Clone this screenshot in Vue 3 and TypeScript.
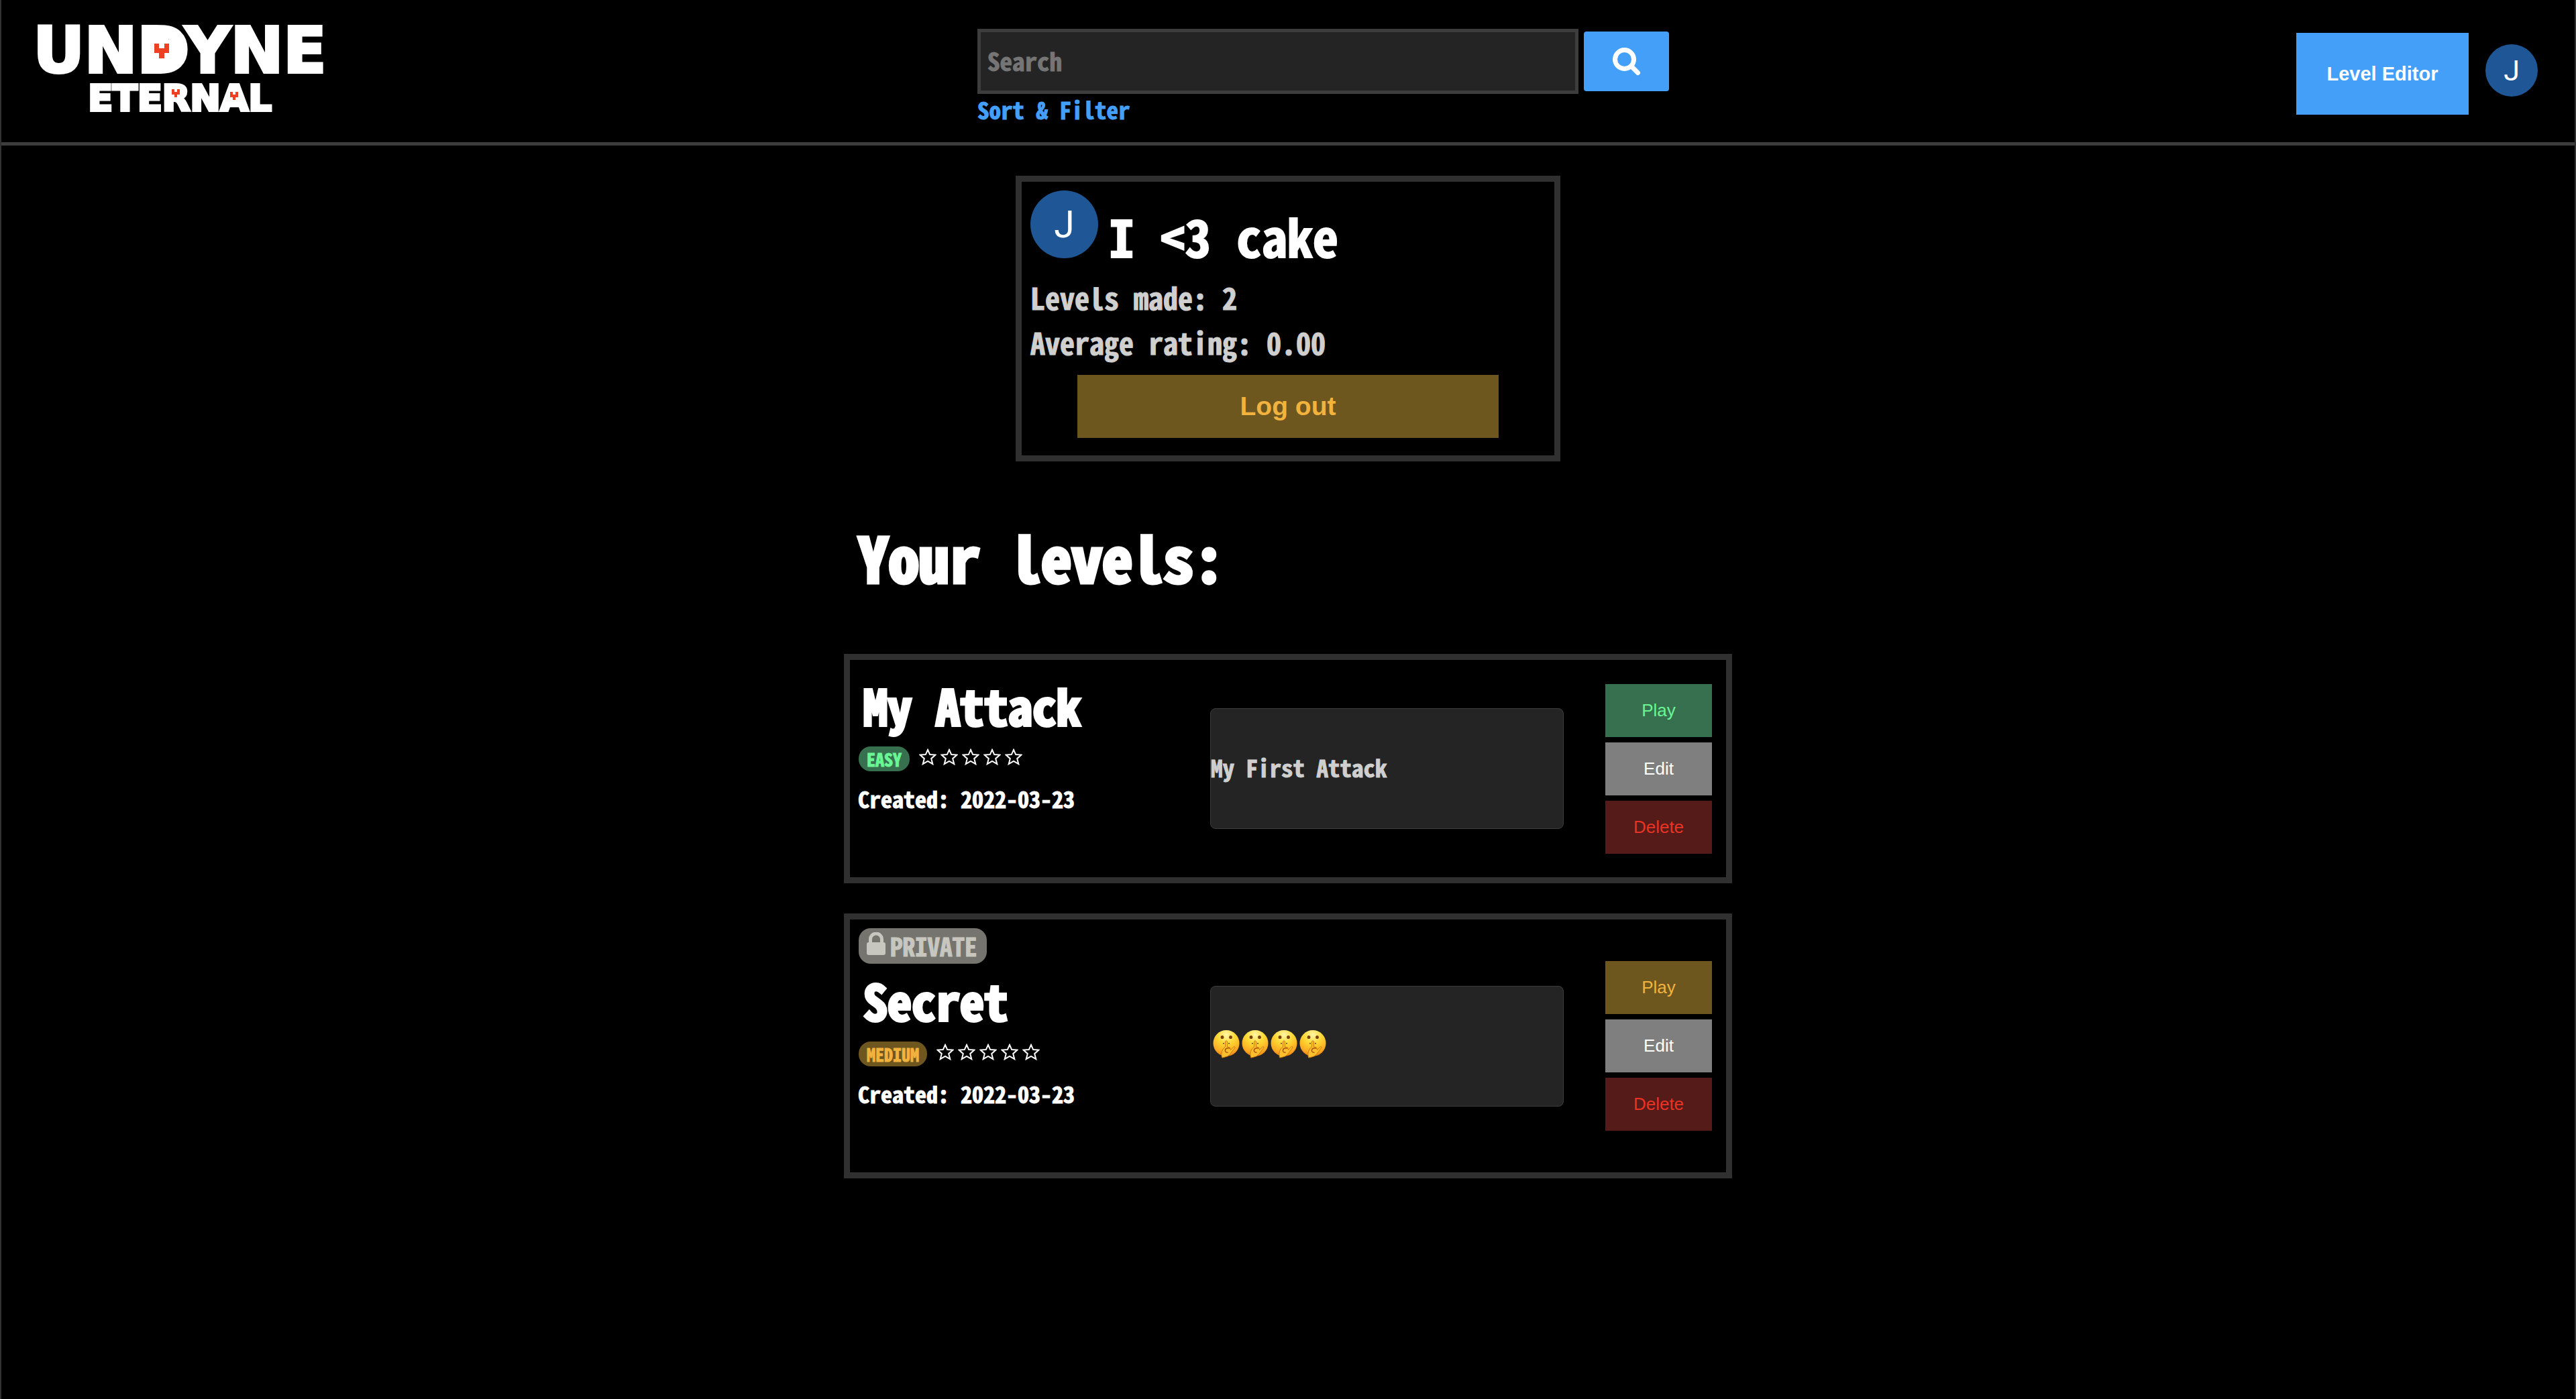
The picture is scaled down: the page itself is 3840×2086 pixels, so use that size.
<script setup lang="ts">
interface Level {
  title: string
  difficulty: string
  tone: string
  isPrivate: boolean
  created: string
  description: string
  shushes: number
}

const levels: Level[] = [
  { title: 'My Attack', difficulty: 'EASY', tone: 'green', isPrivate: false, created: '2022-03-23', description: 'My First Attack', shushes: 0 },
  { title: 'Secret', difficulty: 'MEDIUM', tone: 'gold', isPrivate: true, created: '2022-03-23', description: '', shushes: 4 },
]
</script>

<template>
  <div class="page">
    <header class="bar">
      <a class="logo" href="#">
        <svg viewBox="0 0 451 124" role="img" aria-label="Undyne Eternal">
          <g class="wordmark" text-anchor="middle">
            <text class="logo-top" x="225" y="65">UNDYNE</text>
            <text class="logo-bottom" x="225" y="122">ETERNAL</text>
          </g>
          <!-- white pads close the letter counters behind each heart -->
          <path class="pad" d="M180 11h28v42h-28zM208 16h8v32h-8zM211 89h16v14h-16zM299 93h14v16h-14z" />
          <path class="heart" d="M187 22h7v7h8v-7h7v14h-7v8h-8v-8h-7zM213 90h4v4h4v-4h4v8h-4v4h-4v-4h-4zM300 94h4v4h4v-4h4v8h-4v4h-4v-4h-4z" />
        </svg>
      </a>

      <form class="search" role="search" @submit.prevent>
        <div class="search-row">
          <input class="search-input" type="search" placeholder="Search" aria-label="Search" />
          <button class="search-button" type="submit" aria-label="Search">
            <svg viewBox="0 0 42 42" aria-hidden="true">
              <circle cx="17.500" cy="17.500" r="14" />
              <path d="M28 28l9.500 9.500" />
            </svg>
          </button>
        </div>
        <a class="filter" href="#">Sort &amp; Filter</a>
      </form>

      <nav class="account">
        <button class="editor" type="button">Level Editor</button>
        <a class="avatar" href="#" aria-label="Profile">J</a>
      </nav>
    </header>

    <main>
      <section class="profile">
        <div class="who">
          <span class="avatar large">J</span>
          <h2>I &lt;3 cake</h2>
        </div>
        <p>Levels made: 2</p>
        <p>Average rating: 0.00</p>
        <button class="logout gold" type="button">Log out</button>
      </section>

      <section class="levels">
        <h1>Your levels:</h1>
        <article v-for="level in levels" :key="level.title" class="level">
          <div class="info">
            <span v-if="level.isPrivate" class="private">
              <svg viewBox="0 0 28 34" aria-hidden="true">
                <path class="shackle" d="M5.500 18v-7.500a8.500 8.500 0 0 1 17 0V18" />
                <rect y="15" width="28" height="19" rx="3" />
              </svg>
              PRIVATE
            </span>
            <h3>{{ level.title }}</h3>
            <div class="meta">
              <span class="badge" :class="level.tone">{{ level.difficulty }}</span>
              <span class="stars" role="img" aria-label="0 of 5 stars">
                <svg v-for="n in 5" :key="n" viewBox="0 0 26 26">
                  <path d="M13 2l3.200 7.100 8.200.500-6.200 5.600 2.100 8L13 19l-7.300 4.200 2.100-8-6.200-5.600 8.200-.500z" />
                </svg>
              </span>
            </div>
            <p class="created">Created: {{ level.created }}</p>
          </div>
          <div class="description">
            <template v-if="level.description">{{ level.description }}</template>
            <svg v-if="level.shushes" class="shushes" :viewBox="`0 0 ${level.shushes * 43} 43`" role="img" aria-label="Shushing faces">
              <defs>
                <radialGradient id="face" cx="50%" cy="18%" r="84%">
                  <stop offset="0" stop-color="#fff6a8" />
                  <stop offset=".4" stop-color="#fdd935" />
                  <stop offset=".8" stop-color="#fba922" />
                  <stop offset="1" stop-color="#e87c12" />
                </radialGradient>
              </defs>
              <g v-for="n in level.shushes" :key="n" :transform="`translate(${(n - 1) * 43} 0)`">
                <circle cx="23" cy="20.500" r="19.500" fill="url(#face)" />
                <ellipse cx="17" cy="11.500" rx="2.400" ry="2.600" fill="#7a430b" />
                <ellipse cx="29.500" cy="11.500" rx="2.400" ry="2.600" fill="#7a430b" />
                <path d="M19 21.500v-1.500M27 21.500v-1.500" stroke="#7a430b" stroke-width="2" />
                <path d="M21.500 18q1.500-3 3 0v8q4.500 0 5 4.500l5-5q2 0 1.200 2l-7.200 9.500q-3 3.500-7 4-3 1-5 1-1.500-5 0-9.500 1-4 5-6.500z" fill="#fcc02e" stroke="#d07a10" />
                <path d="M28.500 28q-6-1-7 2.500t4 4" fill="none" stroke="#a9560a" stroke-width="1.500" />
              </g>
            </svg>
          </div>
          <div class="actions">
            <button type="button" :class="level.tone">Play</button>
            <button type="button" class="gray">Edit</button>
            <button type="button" class="red">Delete</button>
          </div>
        </article>
      </section>
    </main>
  </div>
</template>

<style>
body {
  margin: 0;
  background: #000;
}
</style>

<style scoped>
* {
  box-sizing: border-box;
}

.page {
  min-height: 100vh;
  border: solid #333;
  border-width: 0 2px;
  background: #000;
  color: #fff;
  font-family: "Noto Sans Mono CJK JP", "DejaVu Sans Mono", monospace;
  font-weight: 700;
  -webkit-text-stroke: 1px currentColor;
}

h1, h2, h3, p {
  margin: 0;
}

button {
  border: 0;
  padding: 0;
  font-family: "Liberation Sans", Arial, sans-serif;
  -webkit-text-stroke: 0;
  cursor: pointer;
}

a {
  text-decoration: none;
}

.bar {
  display: flex;
  justify-content: space-between;
  align-items: flex-start;
  height: 217px;
  padding: 43px 55px 0 41px;
  border-bottom: 5px solid #3d3d3d;
}

.logo {
  width: 479px;
}

.logo svg {
  display: block;
  width: 451px;
  height: 124px;
  overflow: visible;
}

.wordmark {
  fill: #fff;
  stroke: #fff;
  stroke-width: 4;
  font-family: "DejaVu Sans", sans-serif;
  font-weight: 700;
  -webkit-text-stroke: 4px #fff;
}

.logo-top {
  font-size: 94px;
}

.logo-bottom {
  font-size: 54px;
}

.pad {
  fill: #fff;
}

.heart {
  fill: #ee4023;
}

.search-row {
  display: flex;
  align-items: flex-start;
  gap: 8px;
}

.search-input {
  width: 896px;
  height: 97px;
  padding: 0 10px 4px;
  border: 5px solid #3d3d3d;
  border-radius: 0;
  background: #242424;
  color: #fff;
  font: inherit;
  font-size: 37px;
  -webkit-text-stroke: inherit;
  appearance: none;
}

.search-input::placeholder {
  color: #757575;
  -webkit-text-stroke: 1px #757575;
}

.search-button {
  display: flex;
  align-items: center;
  justify-content: center;
  width: 127px;
  height: 89px;
  margin-top: 4px;
  border-radius: 4px;
  background: #449ff8;
}

.search-button svg {
  width: 42px;
  height: 42px;
  fill: none;
  stroke: #fff;
  stroke-width: 7;
  stroke-linecap: round;
}

.filter {
  display: block;
  color: #449ff8;
  font-size: 35px;
  line-height: 46px;
}

.account {
  display: flex;
  align-items: center;
  gap: 25px;
  padding-top: 6px;
}

.editor {
  width: 257px;
  height: 122px;
  background: #449ff8;
  color: #fff;
  font-size: 29px;
  font-weight: 700;
}

.avatar {
  display: flex;
  flex: none;
  align-items: center;
  justify-content: center;
  width: 78px;
  height: 78px;
  margin-bottom: 10px;
  border-radius: 50%;
  background: #1f5796;
  color: #fff;
  font-family: Roboto, sans-serif;
  font-size: 43px;
  font-weight: 400;
  -webkit-text-stroke: 0;
}

.avatar.large {
  width: 101px;
  height: 101px;
  margin: 0;
  font-size: 55px;
}

main {
  display: flex;
  flex-direction: column;
  align-items: center;
  padding-top: 45px;
}

.profile {
  display: flex;
  flex-direction: column;
  width: 100%;
  max-width: 812px;
  padding: 13px 13px 26px;
  border: 9px solid #303030;
}

.who {
  display: flex;
  gap: 16px;
  height: 126px;
}

.who h2 {
  font-size: 76px;
  line-height: 134px;
  -webkit-text-stroke-width: 2px;
}

.profile p {
  color: #cfcfcf;
  font-size: 44px;
  line-height: 67px;
}

.logout {
  align-self: center;
  width: 628px;
  max-width: 100%;
  height: 94px;
  margin-top: 15px;
  font-size: 39px;
  font-weight: 700;
}

.levels {
  display: flex;
  flex-direction: column;
  width: 100%;
  max-width: 1324px;
}

h1 {
  margin: 74px 0 79px 21px;
  font-size: 91px;
  line-height: 134px;
  -webkit-text-stroke-width: 5px;
}

.level {
  display: flex;
  align-items: center;
  margin-bottom: 45px;
  padding: 13px 21px 13px 12px;
  border: 9px solid #303030;
}

.info {
  flex: 1;
  align-self: flex-start;
  padding-bottom: 79px;
}

.private {
  display: inline-flex;
  align-items: center;
  gap: 7px;
  height: 53px;
  margin-left: 1px;
  padding: 0 14px 0 12px;
  border-radius: 18px;
  background: #75746e;
  color: #c7c6bf;
  font-size: 37px;
  line-height: 53px;
}

.private svg {
  width: 28px;
  height: 34px;
  margin-bottom: 8px;
  fill: currentColor;
}

.private .shackle {
  fill: none;
  stroke: currentColor;
  stroke-width: 5;
}

h3 {
  padding: 8px 8px 16px;
  font-size: 72px;
  line-height: 92px;
  -webkit-text-stroke-width: 4px;
}

.meta {
  display: flex;
  align-items: center;
  gap: 14px;
  margin-left: 1px;
}

.badge {
  padding: 0 12px;
  border-radius: 18px;
  font-size: 26px;
  line-height: 37px;
}

.stars {
  display: flex;
  gap: 6px;
  margin-bottom: 5px;
}

.stars svg {
  width: 26px;
  height: 26px;
  fill: none;
  stroke: #fff;
  stroke-width: 2;
}

.created {
  margin-top: 16px;
  font-size: 34px;
  line-height: 50px;
}

.description {
  display: flex;
  align-items: center;
  width: 527px;
  height: 180px;
  padding-bottom: 6px;
  border: 1px solid #3d3d3d;
  border-radius: 8px;
  background: #242424;
  color: #cfcfcf;
  font-size: 35px;
}

.shushes {
  height: 43px;
}

.actions {
  display: flex;
  flex-direction: column;
  gap: 8px;
  margin-left: 62px;
}

.actions button {
  width: 159px;
  height: 79px;
  font-size: 26px;
}

.green {
  background: #37704e;
  color: #69f796;
}

.gold {
  background: #6e561f;
  color: #f1b33e;
}

.gray {
  background: #7f7f7f;
  color: #fff;
}

.red {
  background: #541b19;
  color: #ea3323;
}
</style>
